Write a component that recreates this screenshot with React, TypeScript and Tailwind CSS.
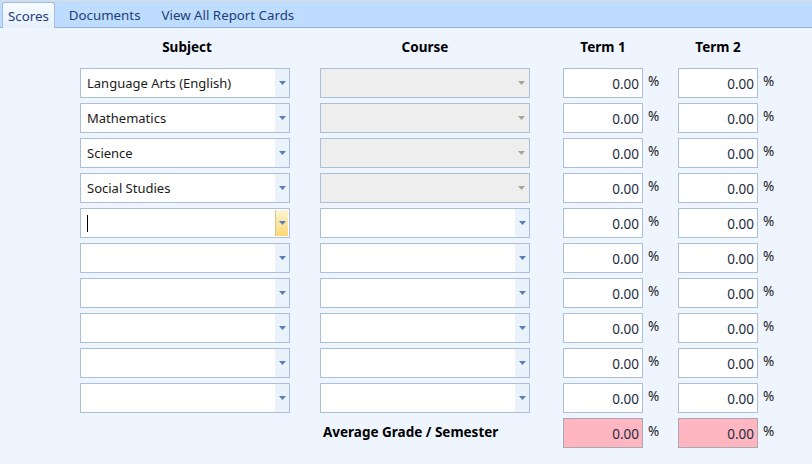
import React from 'react';

const font = { fontFamily: '"Segoe UI", "Noto Sans", "Open Sans", sans-serif' };

const Arrow: React.FC<{ color: string }> = ({ color }) => (
  <svg width="7" height="4" viewBox="0 0 7 4">
    <path d="M0 0h7L3.5 4z" fill={color} />
  </svg>
);

type ComboProps = { value?: string; disabled?: boolean; focused?: boolean };

const Combo: React.FC<ComboProps> = ({ value, disabled, focused }) => (
  <div
    className={`flex h-[30px] w-[210px] border border-[#a9bfdc] ${disabled ? 'bg-[#eeeeee]' : 'bg-white'}`}
  >
    <div className="flex flex-1 items-center pl-[6px] pt-px text-[13px] text-[#1b1b1b]">
      {value}
      {focused && <span className="h-[17px] w-px bg-black" />}
    </div>
    {disabled ? (
      <div className="flex w-[16px] items-center justify-center">
        <Arrow color="#a9a597" />
      </div>
    ) : focused ? (
      <div className="m-px flex w-[13px] items-center justify-center border-l border-[#d8c48f] bg-gradient-to-b from-[#fdf5d4] to-[#fcd870]">
        <Arrow color="#5a7fb8" />
      </div>
    ) : (
      <div className="flex w-[14px] items-center justify-center bg-[#eaf2fb]">
        <Arrow color="#5a7fb8" />
      </div>
    )}
  </div>
);

const Score: React.FC<{ pink?: boolean }> = ({ pink }) => (
  <div className="flex w-[115px]">
    <div
      className={`flex h-[30px] w-[80px] items-center justify-end pr-[3px] pt-px text-[13.5px] text-[#1c2a3c] ${
        pink ? 'border border-[#a9a9b0] bg-[#ffb6c1]' : 'border border-[#a9bfdc] bg-white'
      }`}
    >
      0.00
    </div>
    <span className="ml-[5px] pt-[3px] text-[13.5px] text-[#1b1b1b]">%</span>
  </div>
);

const subjects = ['Language Arts (English)', 'Mathematics', 'Science', 'Social Studies'];

export default function App() {
  const rows = Array.from({ length: 10 }, (_, i) => i);

  return (
    <div className="h-[464px] w-[812px] overflow-hidden bg-[#eef5fe]" style={font}>
      <div className="flex h-[28px] items-end border-b border-[#93b2dc] border-t border-t-[#dcdcdc] bg-[#bddcfe] pl-[2px]">
        <div className="-mb-px flex h-[26px] items-center rounded-t-[3px] border border-b-0 border-[#a3bfe2] bg-gradient-to-b from-[#f7fbff] to-[#e6f0fc] px-[5px] pt-[3px] text-[13.3px] text-[#1e3e78]">
          Scores
        </div>
        <div className="flex h-[26px] items-center pl-[14px] pt-[3px] text-[13.3px] text-[#1e3e78]">Documents</div>
        <div className="flex h-[26px] items-center pl-[21px] pt-[3px] text-[13.3px] text-[#1e3e78]">
          View All Report Cards
        </div>
      </div>

      <div className="flex pt-[9px] text-[13.5px] font-bold text-black">
        <div className="ml-[80px] w-[210px] pl-[4px] text-center">Subject</div>
        <div className="ml-[30px] w-[210px] text-center">Course</div>
        <div className="ml-[33px] w-[80px] text-center">Term 1</div>
        <div className="ml-[35px] w-[80px] text-center">Term 2</div>
      </div>

      <div className="mt-[11px] flex flex-col gap-[5px]">
        {rows.map((i) => (
          <div key={i} className="flex">
            <div className="ml-[80px]">
              <Combo value={subjects[i]} focused={i === 4} />
            </div>
            <div className="ml-[30px]">
              <Combo disabled={i < 4} />
            </div>
            <div className="ml-[33px]">
              <Score />
            </div>
            <Score />
          </div>
        ))}
        <div className="flex">
          <div className="ml-[323px] w-[240px] pt-[4px] text-[13.5px] font-bold text-black">Average Grade / Semester</div>
          <Score pink />
          <Score pink />
        </div>
      </div>
    </div>
  );
}
